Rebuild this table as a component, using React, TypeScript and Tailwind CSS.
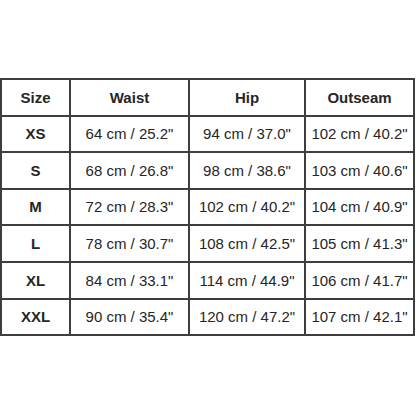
const ROWS = [
  ['XS', '64 cm / 25.2"', '94 cm / 37.0"', '102 cm / 40.2"'],
  ['S', '68 cm / 26.8"', '98 cm / 38.6"', '103 cm / 40.6"'],
  ['M', '72 cm / 28.3"', '102 cm / 40.2"', '104 cm / 40.9"'],
  ['L', '78 cm / 30.7"', '108 cm / 42.5"', '105 cm / 41.3"'],
  ['XL', '84 cm / 33.1"', '114 cm / 44.9"', '106 cm / 41.7"'],
  ['XXL', '90 cm / 35.4"', '120 cm / 47.2"', '107 cm / 42.1"'],
];

const HEADERS = ['Size', 'Waist', 'Hip', 'Outseam'];

export default function App() {
  return (
    <div className="h-[416px] w-[416px] bg-white pt-[78px] font-['Liberation_Sans',Arial,sans-serif] text-[15px] text-[#262626]">
      <table className="w-[413px] table-fixed border-collapse border-2 border-[#3e3e3e]">
        <colgroup>
          <col className="w-[69px]" />
          <col className="w-[119px]" />
          <col className="w-[116px]" />
          <col className="w-[109px]" />
        </colgroup>
        <thead>
          <tr className="h-[36.6px]">
            {HEADERS.map((h) => (
              <th key={h} className="border-2 border-[#3e3e3e] p-0 pt-px text-center font-bold">
                {h}
              </th>
            ))}
          </tr>
        </thead>
        <tbody>
          {ROWS.map((row) => (
            <tr key={row[0]} className="h-[36.6px]">
              {row.map((cell, i) => (
                <td
                  key={i}
                  className={
                    i === 0
                      ? 'border-2 border-[#3e3e3e] p-0 pt-px text-center font-bold'
                      : 'border-2 border-[#3e3e3e] p-0 pt-px text-center'
                  }
                >
                  {cell}
                </td>
              ))}
            </tr>
          ))}
        </tbody>
      </table>
    </div>
  );
}
